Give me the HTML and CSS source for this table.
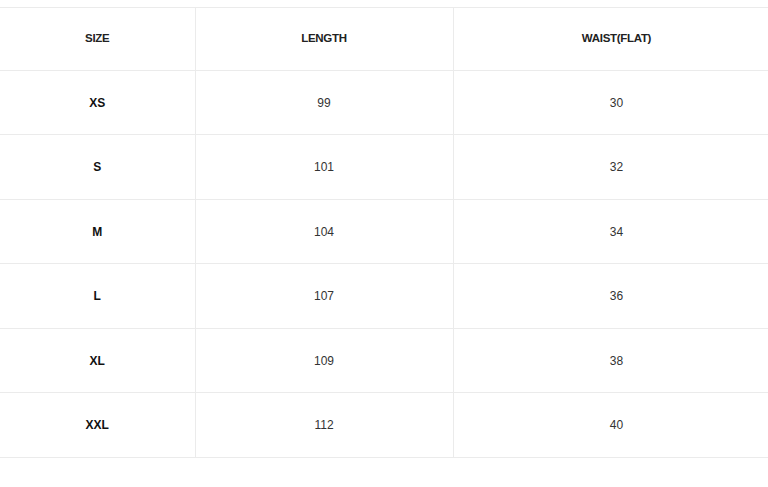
FILE: index.html
```html
<!DOCTYPE html>
<html>
<head>
<meta charset="utf-8">
<link rel="stylesheet" href="styles.css">
</head>
<body>
<div class="wrap">
<table class="size-table">
  <colgroup>
    <col class="c1"><col class="c2"><col class="c3">
  </colgroup>
  <thead>
    <tr><th>SIZE</th><th>LENGTH</th><th>WAIST(FLAT)</th></tr>
  </thead>
  <tbody>
    <tr><td class="sz">XS</td><td>99</td><td>30</td></tr>
    <tr><td class="sz">S</td><td>101</td><td>32</td></tr>
    <tr><td class="sz">M</td><td>104</td><td>34</td></tr>
    <tr><td class="sz">L</td><td>107</td><td>36</td></tr>
    <tr><td class="sz">XL</td><td>109</td><td>38</td></tr>
    <tr><td class="sz">XXL</td><td>112</td><td>40</td></tr>
  </tbody>
</table>
</div>
</body>
</html>
```
FILE: styles.css
```css
html, body {
  margin: 0;
  padding: 0;
  background: #fff;
  overflow: hidden;
}
.wrap {
  padding-top: 7px;
  width: 780px;
}
.size-table {
  border-collapse: collapse;
  width: 780px;
  table-layout: fixed;
  font-family: "Liberation Sans", Arial, sans-serif;
  font-size: 12px;
  color: #333;
}
.c1 { width: 195px; }
.c2 { width: 258px; }
.c3 { width: 327px; }
.size-table th,
.size-table td {
  border: 1px solid #ebebeb;
  text-align: center;
  vertical-align: middle;
  height: 63px;
  padding: 0;
}
.size-table tr:nth-child(even) td { height: 64px; }
.size-table th {
  height: 59px;
  padding-bottom: 3px;
  font-weight: bold;
  font-size: 11.5px;
  color: #222;
  letter-spacing: -0.3px;
}
.size-table th:first-child,
.size-table td:first-child { border-left: none; }
.size-table td.sz {
  font-weight: bold;
  color: #111;
  font-size: 12px;
}
```
